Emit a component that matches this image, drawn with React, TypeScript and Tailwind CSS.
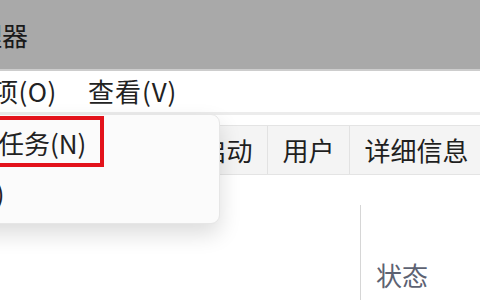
const tabs = [
    { label: '进程', w: 'w-[82px]' },
    { label: '性能', w: 'w-[82px]' },
    { label: '应用历史记录', w: 'w-[186px]' },
    { label: '启动', w: 'w-[82px]' },
    { label: '用户', w: 'w-[82px]' },
    { label: '详细信息', w: 'w-[134px]' },
    { label: '服务', w: 'w-[82px]' },
];

export default function App() {
    return (
        <div className="relative h-[300px] w-[480px] overflow-hidden bg-white font-['Noto_Sans_CJK_SC','Noto_Sans',sans-serif] text-[#1d1d1d]">
            {/* title bar */}
            <div className="flex h-[69px] items-center bg-[#a9a9a9]">
                <span className="ml-[-102px] whitespace-nowrap text-[26px] leading-none text-[#1a1a1a]">任务管理器</span>
            </div>
            <div className="h-[2px] bg-[#cdcdcd]" />

            {/* menu bar */}
            <div className="flex h-[41px] items-center gap-[31px] whitespace-nowrap pb-[2px] text-[26px] leading-none text-[#222]">
                <span className="ml-[-8px] tracking-[0.5px]">项(O)</span>
                <span className="tracking-[1px]">查看(V)</span>
            </div>
            <div className="h-[3px] bg-[#ececec]" />

            {/* tabs */}
            <div className="mt-[10px] flex h-[50px] whitespace-nowrap border-y border-[#e4e4e4] bg-[#f4f4f4] ml-[-164px]">
                {tabs.map((t) => (
                    <div
                        key={t.label}
                        className={`${t.w} flex shrink-0 items-center justify-center border-r border-[#e2e2e2] text-[26px] leading-none text-[#1f1f1f]`}
                    >
                        {t.label}
                    </div>
                ))}
            </div>

            {/* content */}
            <div className="mt-[30px] flex">
                <div className="ml-[360px] h-[100px] border-l border-[#d6d6d6] pl-[15px] pt-[57px]">
                    <span className="text-[26px] leading-none text-[#5d6272]">状态</span>
                </div>
            </div>

            {/* dropdown menu */}
            <div className="absolute left-[-120px] top-[114px] h-[110px] w-[340px] rounded-[9px] border border-[#e6e6e6] bg-[#fbfbfb] pt-[3px] shadow-[0_10px_22px_rgba(0,0,0,0.14)]">
                <div className="flex h-[50px] items-center whitespace-nowrap pl-[39px] text-[26px] leading-none text-[#222]">
                    运行新任务(N)
                </div>
                <div className="flex h-[50px] items-center whitespace-nowrap pl-[39px] text-[26px] leading-none text-[#222]">
                    退出(X)
                </div>
            </div>

            {/* highlight */}
            <div className="absolute left-[-10px] top-[116px] h-[51px] w-[114px] border-[4px] border-[#e3121b]" />
        </div>
    );
}
